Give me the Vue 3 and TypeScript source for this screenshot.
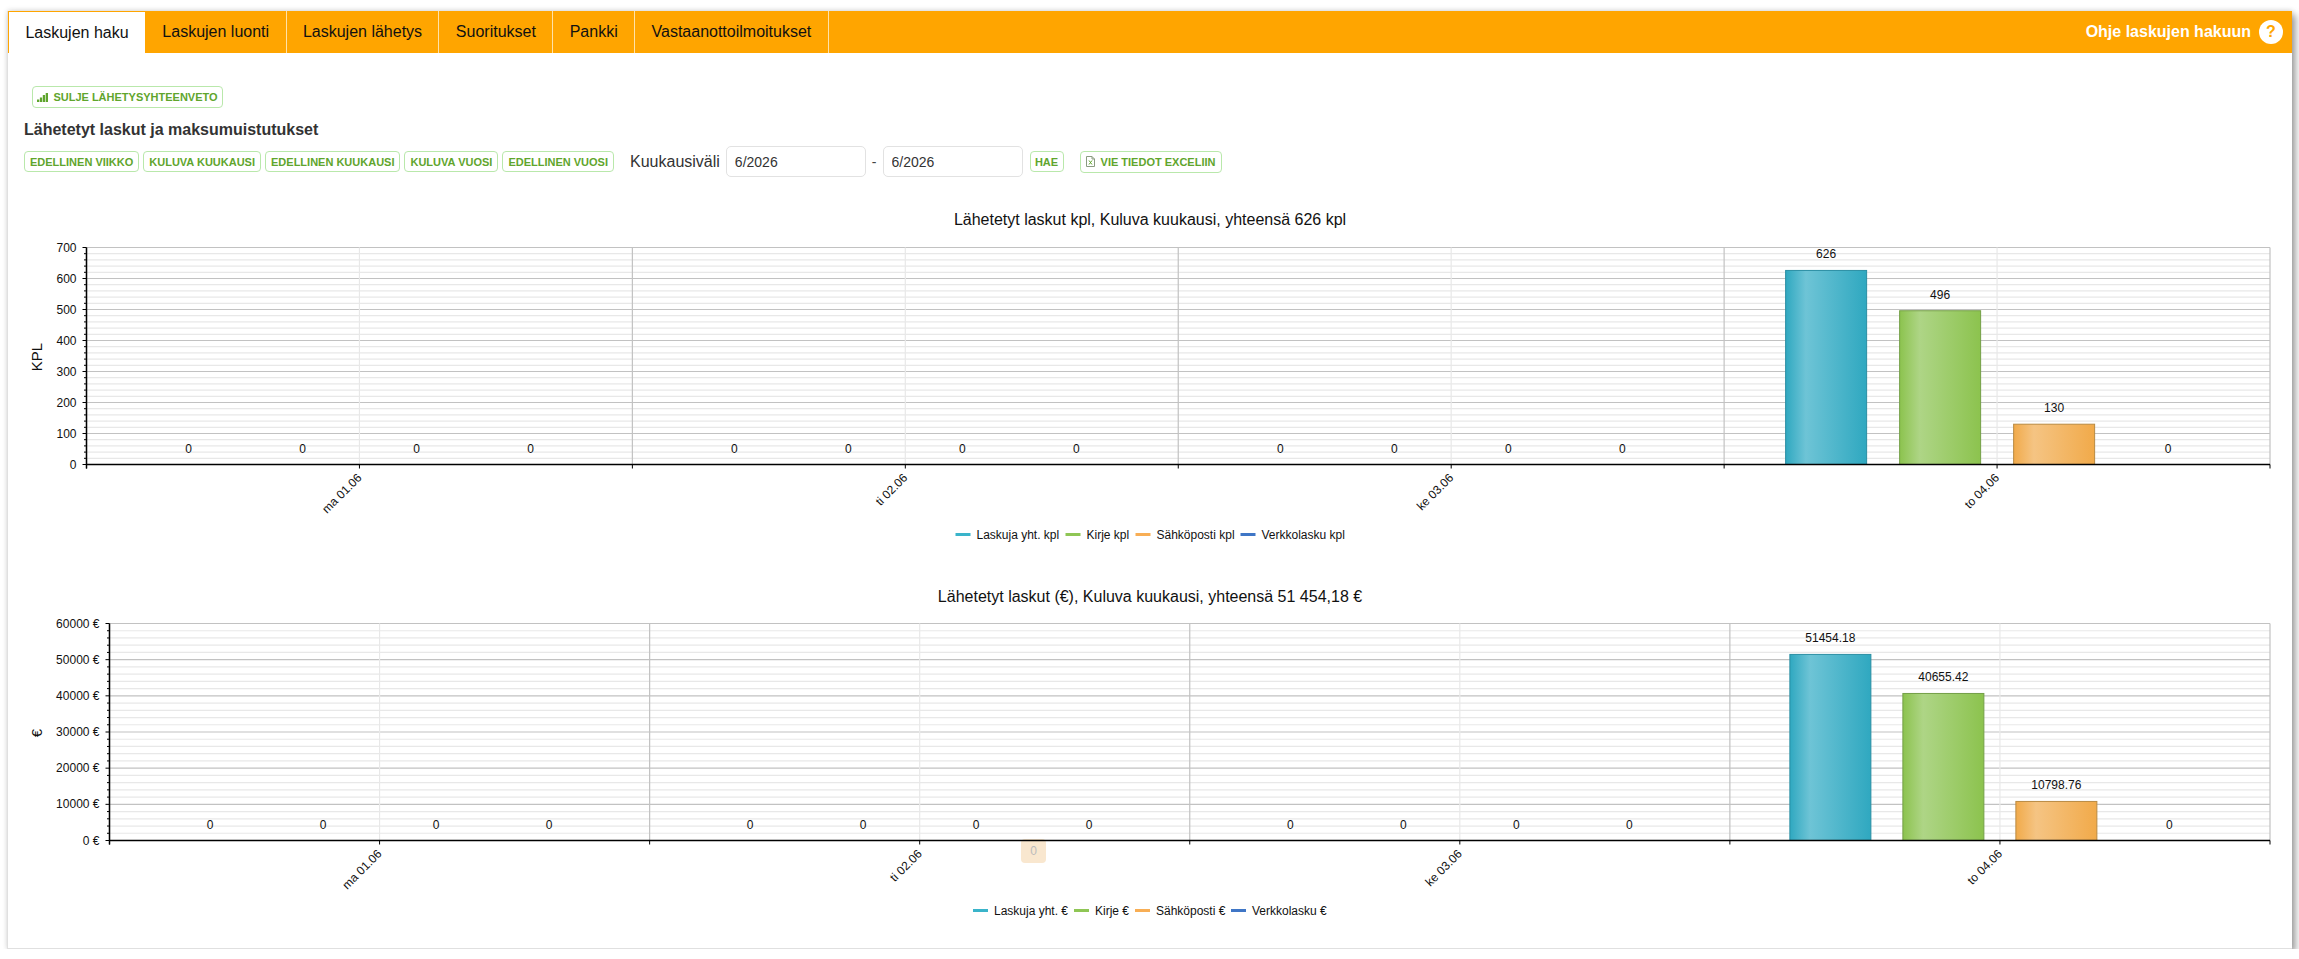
<template>
  <div class="panel">
    <nav class="tabs">
      <a v-for="(tab, i) in tabs" :key="tab" class="tab" :class="{ active: i === 0 }">{{ tab }}</a>
      <div class="help">
        <span>Ohje laskujen hakuun</span>
        <span class="help-icon">?</span>
      </div>
    </nav>

    <div class="content">
      <button class="btn summary-btn">
        <svg class="btn-icon" viewBox="0 0 11 9" width="11" height="9">
          <rect x="0" y="6.500" width="2.300" height="2.500" fill="#5fa52d" />
          <rect x="2.900" y="4.500" width="2.300" height="4.500" fill="#5fa52d" />
          <rect x="5.800" y="2" width="2.300" height="7" fill="#5fa52d" />
          <rect x="8.700" y="0" width="2.300" height="9" fill="#5fa52d" />
        </svg>
        SULJE LÄHETYSYHTEENVETO
      </button>

      <h3 class="heading">Lähetetyt laskut ja maksumuistutukset</h3>

      <div class="filters">
        <button v-for="p in periods" :key="p" class="btn">{{ p }}</button>
        <label class="range-label">Kuukausiväli</label>
        <input class="month" value="6/2026" />
        <span class="dash">-</span>
        <input class="month" value="6/2026" />
        <button class="btn hae">HAE</button>
        <button class="btn excel">
          <svg class="btn-icon" viewBox="0 0 9 11" width="9" height="11">
            <path d="M.5 .5h5.500L8.500 3v7.500h-8z M6 .5V3h2.500" fill="#fff" stroke="#8a9a80" stroke-width="1" />
            <path d="M3 4.500l3 4M6 4.500l-3 4" stroke="#5fa52d" stroke-width="1" fill="none" />
          </svg>
          VIE TIEDOT EXCELIIN
        </button>
      </div>
    </div>

    <svg
      v-for="c in charts"
      :key="c.title"
      class="chart"
      :viewBox="`8 ${c.svgTop} 2283 ${c.svgHeight}`"
      :width="2283"
      :height="c.svgHeight"
    >
      <defs>
        <linearGradient v-for="b in barColors" :id="b.id" :key="b.id" x1="0" x2="1" y1="0" y2="0">
          <stop offset="0" :stop-color="b.dark" />
          <stop offset="0.25" :stop-color="b.light" />
          <stop offset="1" :stop-color="b.dark" />
        </linearGradient>
      </defs>

      <text class="title" :x="1150" :y="c.titleY">{{ c.title }}</text>

      <!-- vaakaviivat -->
      <line
        v-for="g in hGrid(c)"
        :key="'h' + g.y"
        :x1="c.left"
        :x2="right"
        :y1="g.y"
        :y2="g.y"
        :stroke="g.major ? '#c2c2c2' : '#e8e8e8'"
        stroke-width="1.2"
      />
      <!-- pystyviivat -->
      <line
        v-for="g in vGrid(c)"
        :key="'v' + g.x"
        :x1="g.x"
        :x2="g.x"
        :y1="c.top"
        :y2="c.top + plotHeight"
        :stroke="g.major ? '#c2c2c2' : '#e8e8e8'"
        stroke-width="1.2"
      />

      <rect v-if="c.tooltip" x="1021" y="839" width="25" height="24" rx="4" fill="#f9e7cf" />
      <text v-if="c.tooltip" class="tip" x="1033.500" y="855">0</text>

      <!-- palkit -->
      <rect
        v-for="(v, i) in c.values"
        :key="'bar' + i"
        :x="barX(c, i) - 40.500"
        :y="c.top + plotHeight - barH(c, v)"
        width="81"
        :height="barH(c, v)"
        :fill="`url(#${barColors[i].id})`"
        :stroke="barColors[i].border"
        stroke-width="1"
      />

      <!-- akselit -->
      <line :x1="c.left" :x2="c.left" :y1="c.top" :y2="c.top + plotHeight + 4" class="axis" />
      <line :x1="c.left" :x2="right" :y1="c.top + plotHeight" :y2="c.top + plotHeight" class="axis" />
      <line
        v-for="g in vGrid(c)"
        :key="'xt' + g.x"
        :x1="g.x"
        :x2="g.x"
        :y1="c.top + plotHeight"
        :y2="c.top + plotHeight + 4"
        class="tick"
      />
      <line
        v-for="g in hGrid(c)"
        :key="'yt' + g.y"
        :x1="c.left - (g.major ? 4 : 2.500)"
        :x2="c.left"
        :y1="g.y"
        :y2="g.y"
        class="tick"
      />

      <!-- y-akselin tekstit -->
      <text
        v-for="(t, i) in c.yLabels"
        :key="'yl' + i"
        class="label end"
        :x="c.left - 10"
        :y="c.top + plotHeight - (i * plotHeight) / (c.yLabels.length - 1) + 4"
      >{{ t }}</text>
      <text class="axis-title" :transform="`translate(42 ${c.top + plotHeight / 2 + 1}) rotate(-90)`">{{ c.yTitle }}</text>

      <!-- arvot -->
      <template v-for="(day, d) in days" :key="day.name">
        <text
          v-for="(v, i) in day.values(c)"
          :key="i"
          class="label mid"
          :x="c.left + d * groupW(c) + c.offset + i * c.step"
          :y="c.top + plotHeight - barH(c, v) - 12"
        >{{ v }}</text>
        <text
          class="label end"
          :transform="`translate(${c.left + (d + 0.5) * groupW(c) + 3} ${c.top + plotHeight + 14}) rotate(-45)`"
        >{{ day.name }}</text>
      </template>

      <!-- selite -->
      <g v-for="l in c.legend" :key="l.text">
        <line :x1="l.x" :x2="l.x + 15" :y1="c.legendY" :y2="c.legendY" :stroke="l.color" stroke-width="3" />
        <text class="label" :x="l.x + 21" :y="c.legendY + 4">{{ l.text }}</text>
      </g>
    </svg>
  </div>
</template>

<script setup lang="ts">
interface Legend {
  text: string
  x: number
  color: string
}

interface Chart {
  title: string
  yTitle: string
  svgTop: number
  svgHeight: number
  titleY: number
  top: number
  left: number
  offset: number
  step: number
  max: number
  yLabels: string[]
  values: number[]
  legendY: number
  legend: Legend[]
  tooltip: boolean
}

const tabs = ['Laskujen haku', 'Laskujen luonti', 'Laskujen lähetys', 'Suoritukset', 'Pankki', 'Vastaanottoilmoitukset']
const periods = ['EDELLINEN VIIKKO', 'KULUVA KUUKAUSI', 'EDELLINEN KUUKAUSI', 'KULUVA VUOSI', 'EDELLINEN VUOSI']

const right = 2270
const plotHeight = 217

const teal = '#3ab4ca'
const green = '#8fc655'
const orange = '#f8ae55'
const blue = '#3f76c6'

const barColors = [
  { id: 'barTeal', dark: '#2fa8c0', light: '#6ec4d6', border: '#2a8ea3' },
  { id: 'barGreen', dark: '#8cc34e', light: '#aed586', border: '#749f47' },
  { id: 'barOrange', dark: '#f1aa4a', light: '#f5c483', border: '#b98a42' }
]

const charts: Chart[] = [
  {
    title: 'Lähetetyt laskut kpl, Kuluva kuukausi, yhteensä 626 kpl',
    yTitle: 'KPL',
    svgTop: 200,
    svgHeight: 360,
    titleY: 225,
    top: 247.500,
    left: 86.500,
    offset: 102,
    step: 114,
    max: 700,
    yLabels: ['0', '100', '200', '300', '400', '500', '600', '700'],
    values: [626, 496, 130],
    legendY: 534.500,
    legend: [
      { text: 'Laskuja yht. kpl', x: 955.500, color: teal },
      { text: 'Kirje kpl', x: 1065.500, color: green },
      { text: 'Sähköposti kpl', x: 1135.500, color: orange },
      { text: 'Verkkolasku kpl', x: 1240.500, color: blue }
    ],
    tooltip: false
  },
  {
    title: 'Lähetetyt laskut (€), Kuluva kuukausi, yhteensä 51 454,18 €',
    yTitle: '€',
    svgTop: 560,
    svgHeight: 380,
    titleY: 602,
    top: 623.500,
    left: 109.500,
    offset: 100.500,
    step: 113,
    max: 60000,
    yLabels: ['0 €', '10000 €', '20000 €', '30000 €', '40000 €', '50000 €', '60000 €'],
    values: [51454.18, 40655.42, 10798.76],
    legendY: 910.500,
    legend: [
      { text: 'Laskuja yht. €', x: 973, color: teal },
      { text: 'Kirje €', x: 1074, color: green },
      { text: 'Sähköposti €', x: 1135, color: orange },
      { text: 'Verkkolasku €', x: 1231, color: blue }
    ],
    tooltip: true
  }
]

const days = [
  { name: 'ma 01.06', values: () => [0, 0, 0, 0] },
  { name: 'ti 02.06', values: () => [0, 0, 0, 0] },
  { name: 'ke 03.06', values: () => [0, 0, 0, 0] },
  { name: 'to 04.06', values: (c: Chart) => [...c.values, 0] }
]

const groupW = (c: Chart) => (right - c.left) / 4
const barX = (c: Chart, i: number) => c.left + 3 * groupW(c) + c.offset + i * c.step
const barH = (c: Chart, v: number) => (v / c.max) * plotHeight

// pääviivojen väliin 4 apuviivaa
const hGrid = (c: Chart) => {
  const majors = c.yLabels.length - 1
  const out: { y: number; major: boolean }[] = []
  for (let i = 0; i <= majors * 5; i++) {
    out.push({ y: c.top + (i * plotHeight) / (majors * 5), major: i % 5 === 0 })
  }
  return out
}

const vGrid = (c: Chart) => {
  const out: { x: number; major: boolean }[] = []
  for (let i = 0; i < 8; i++) {
    out.push({ x: c.left + (i * groupW(c)) / 2, major: i % 2 === 0 })
  }
  out.push({ x: right, major: true })
  return out
}
</script>

<style>
html,
body {
  background: #fff;
}
</style>

<style scoped>
.panel {
  box-sizing: border-box;
  width: 2285px;
  height: 938px;
  margin: 11px 0 0 7px;
  background: #fff;
  border-left: 1px solid #e0e0e0;
  border-bottom: 1px solid #e0e0e0;
  box-shadow: 4px 4px 7px rgba(0, 0, 0, 0.35), 0 -1px 5px rgba(0, 0, 0, 0.12);
  font-family: "Liberation Sans", Arial, sans-serif;
  color: #222;
}

.tabs {
  display: flex;
  align-items: stretch;
  height: 42px;
  background: #ffa500;
}

.tab {
  display: flex;
  align-items: center;
  padding: 0 16.4px;
  font-size: 16px;
  color: #111;
  border-right: 1px solid #ffe2a8;
}

.tab.active {
  background: #fff;
  border: 1px solid #ffa500;
  border-bottom: 0;
}

.help {
  display: flex;
  align-items: center;
  gap: 8px;
  margin-left: auto;
  padding-right: 9px;
  color: #fff;
  font-size: 16px;
  font-weight: 700;
}

.help-icon {
  display: flex;
  align-items: center;
  justify-content: center;
  width: 24px;
  height: 24px;
  border-radius: 50%;
  background: #fff;
  color: #ffa500;
  font-size: 16px;
  font-weight: 700;
}

.content {
  padding: 33px 0 0 16px;
  height: 147px;
  box-sizing: border-box;
}

.btn {
  display: inline-flex;
  align-items: center;
  justify-content: center;
  gap: 4px;
  box-sizing: border-box;
  height: 21px;
  padding: 0 5px;
  background: #fff;
  border: 1px solid #b9e8ab;
  border-radius: 4px;
  font-family: inherit;
  font-size: 11px;
  font-weight: 700;
  color: #5fa52d;
  white-space: nowrap;
}

.summary-btn {
  height: 22px;
  margin-left: 8px;
  width: 191px;
  gap: 5px;
  padding: 0;
}

.btn-icon {
  flex: none;
}

.heading {
  margin: 12px 0 0;
  font-size: 16px;
  line-height: 20px;
  font-weight: 700;
  color: #333;
}

.filters {
  display: flex;
  align-items: center;
  gap: 4px;
  margin-top: 6px;
}

.range-label {
  margin: 0 2px 0 12px;
  font-size: 16px;
  color: #333;
}

.month {
  box-sizing: border-box;
  width: 140px;
  height: 31px;
  padding: 0 8px;
  border: 1px solid #e2e2e2;
  border-radius: 5px;
  font-family: inherit;
  font-size: 14px;
  color: #333;
  background: #fff;
  outline: none;
}

.dash {
  margin: 0 2px;
  font-size: 14px;
  color: #444;
}

.hae {
  margin-left: 3px;
  width: 34px;
  padding: 0;
}

.excel {
  margin-left: 12px;
  width: 142px;
  height: 22px;
  gap: 6px;
  padding: 0;
}

.chart {
  display: block;
}

.title {
  font-size: 16px;
  text-anchor: middle;
  fill: #111;
}

.label {
  font-size: 12px;
  fill: #111;
}

.label.end {
  text-anchor: end;
}

.label.mid {
  text-anchor: middle;
}

.tip {
  font-size: 12px;
  text-anchor: middle;
  fill: #bbb;
}

.axis-title {
  font-size: 15px;
  text-anchor: middle;
  fill: #111;
}

.axis {
  stroke: #000;
  stroke-width: 1.5;
}

.tick {
  stroke: #000;
  stroke-width: 1;
}
</style>
